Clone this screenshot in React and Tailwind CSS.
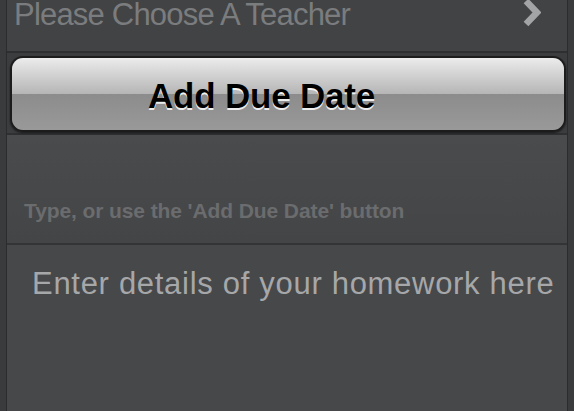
export default function App() {
  return (
    <div
      className="w-[574px] h-[411px] overflow-hidden flex bg-[#3a3b3d]"
      style={{ fontFamily: "'Liberation Sans', Arial, sans-serif" }}
    >
      <div className="w-[7px] bg-[#3a3b3d] border-r border-[#2b2c2e]" />
      <div className="flex-1 flex flex-col">
        {/* Teacher row */}
        <div className="h-[53px] bg-[#424345] flex items-start justify-between pl-[7px] pr-[26px] border-b-2 border-[#2e2f31]">
          <span className="text-[31px] leading-none -mt-[1px] text-[#7b7c7e] tracking-[-0.8px] whitespace-nowrap">
            Please Choose A Teacher
          </span>
          <svg width="18" height="28" viewBox="0 0 18 28" className="-mt-[1px]">
            <path d="M3 2 L14 13.5 L3 25" fill="none" stroke="#a3a4a6" strokeWidth="6.5" strokeLinejoin="miter" />
          </svg>
        </div>

        {/* Button band */}
        <div className="h-[82px] bg-[#3c3d3f] pl-[3px] pr-[1px] pt-[3px] pb-[1px] border-b-2 border-[#2f3032]">
          <div className="h-full rounded-[13px] border-2 border-[#1c1c1d] shadow-[0_1px_2px_rgba(0,0,0,0.6)] overflow-hidden flex flex-col relative">
            <div className="h-[50%] bg-gradient-to-b from-[#ececec] to-[#b5b5b5]" />
            <div className="flex-1 bg-gradient-to-b from-[#8c8c8c] to-[#999999]" />
            <div className="absolute inset-0 flex items-center justify-center pr-[53px]">
              <span className="text-[35px] leading-none font-bold text-black tracking-[-0.2px] [text-shadow:0_2px_0_rgba(255,255,255,0.85)] pt-[2px]">
                Add Due Date
              </span>
            </div>
          </div>
        </div>

        {/* Hint section */}
        <div className="h-[110px] bg-gradient-to-b from-[#4a4b4d] to-[#444547] flex items-end pl-[17px] pb-[22px] border-b-2 border-[#333436]">
          <span className="text-[21px] font-bold text-[#6b6c6e] leading-none tracking-[-0.1px]">
            Type, or use the 'Add Due Date' button
          </span>
        </div>

        {/* Details */}
        <div className="flex-1 bg-[#47484a] pl-[25px] pt-[23px]">
          <span className="text-[31px] leading-none text-[#a6a7a9] tracking-[0.7px] whitespace-nowrap">
            Enter details of your homework here
          </span>
        </div>
      </div>
      <div className="w-[7px] bg-[#3a3b3d] border-l border-[#2b2c2e]" />
    </div>
  );
}
